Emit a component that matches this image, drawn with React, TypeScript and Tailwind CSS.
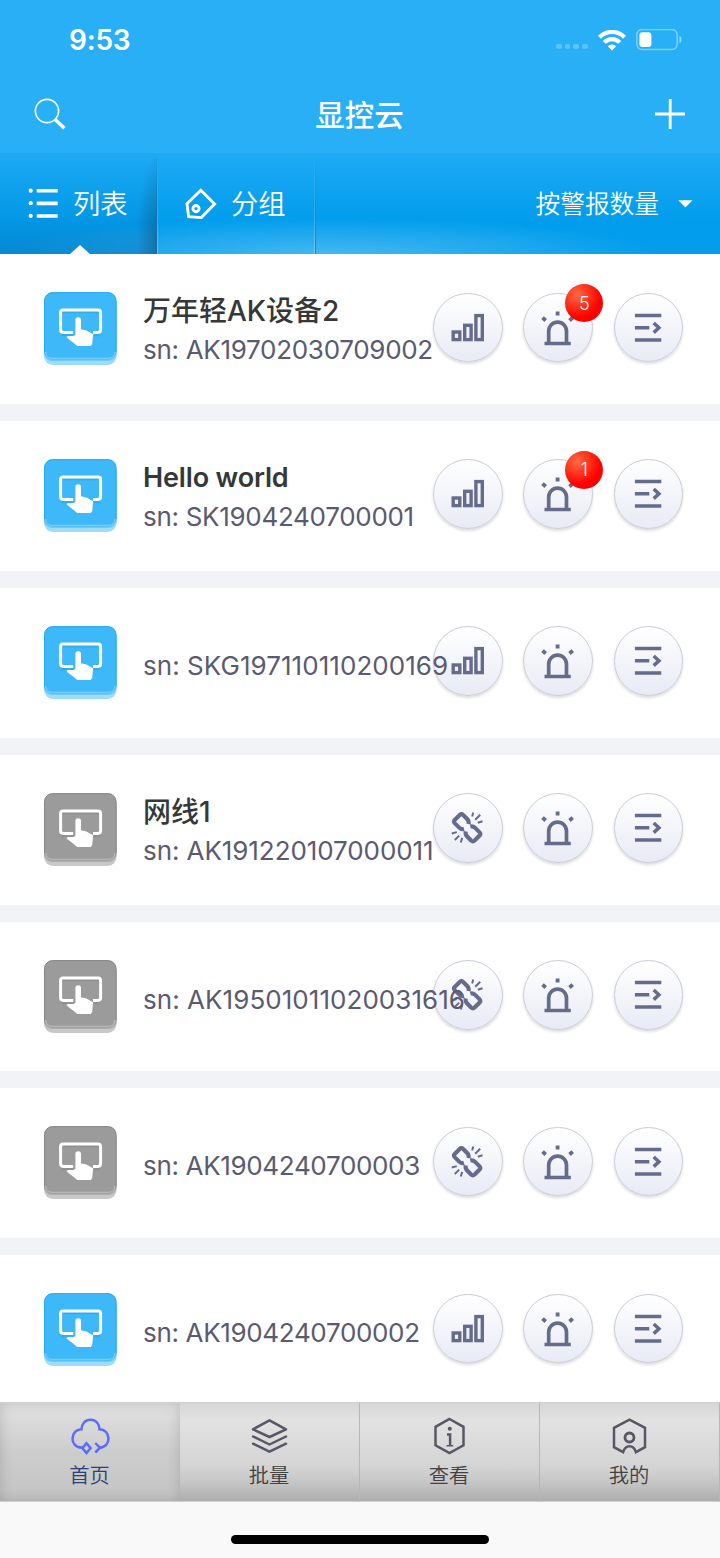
import type { ReactNode } from 'react';
import clsx from 'clsx';

interface Device {
    name?: string;
    sn: string;
    online: boolean;
    alarms?: number;
    nameClass?: string;
    snTracking: string;
}

const devices: Device[] = [
    { name: '万年轻AK设备2', sn: 'AK19702030709002', online: true, alarms: 5, nameClass: 'text-[28px] font-medium', snTracking: 'tracking-[-0.3px]' },
    { name: 'Hello world', sn: 'SK1904240700001', online: true, alarms: 1, nameClass: 'text-[27px] font-semibold tracking-[-0.15px]', snTracking: 'tracking-[-0.3px]' },
    { sn: 'SKG197110110200169', online: true, snTracking: 'tracking-[0.05px]' },
    { name: '网线1', sn: 'AK191220107000011', online: false, nameClass: 'text-[28px] font-medium', snTracking: 'tracking-[-0.08px]' },
    { sn: 'AK19501011020031616', online: false, snTracking: 'tracking-[0.05px]' },
    { sn: 'AK1904240700003', online: false, snTracking: 'tracking-[-0.34px]' },
    { sn: 'AK1904240700002', online: true, snTracking: 'tracking-[-0.34px]' },
];

function StatusBar() {
    return (
        <div className="flex h-20 items-center justify-between pl-[69px] pr-[37px] text-white">
            <span className="text-[28px] font-semibold leading-none tracking-[-0.2px]">9:53</span>
            <div className="flex items-center">
                <div className="mr-[10px] mt-[13px] flex gap-[3px]">
                    {[0, 1, 2, 3].map((i) => (
                        <span key={i} className="h-[5.5px] w-[5.8px] rounded-[2px] bg-white/25" />
                    ))}
                </div>
                <svg width="28" height="21" viewBox="0 0 28 21" fill="none" stroke="currentColor" strokeWidth="4.2">
                    <path d="M1.5 7.2a17.6 17.6 0 0 1 25 0" />
                    <path d="M6.3 12.4a10.8 10.8 0 0 1 15.4 0" />
                    <path d="M9.8 16.3a5.8 5.8 0 0 1 8.4 0l-4.2 4.3z" fill="currentColor" stroke="none" />
                </svg>
                <svg className="ml-[10px]" width="47" height="22" viewBox="0 0 47 22">
                    <rect x="0.8" y="0.4" width="40.4" height="20.2" rx="5.5" fill="none" stroke="white" strokeOpacity="0.4" strokeWidth="1.5" />
                    <rect x="3.4" y="3.2" width="12" height="14.8" rx="3" fill="white" />
                    <path d="M43.5 6.7c2.7 1.4 2.7 6.2 0 7.6z" fill="white" fillOpacity="0.5" />
                </svg>
            </div>
        </div>
    );
}

function Header() {
    return (
        <div className="flex h-[73px] items-start justify-between px-[34px] text-white">
            <svg className="mt-[17px]" width="33" height="34" viewBox="0 0 33 34" fill="none" stroke="currentColor">
                <circle cx="13" cy="14" r="11.6" strokeWidth="1.6" />
                <path d="M20.8 22.2l9.6 9" strokeWidth="3.4" />
            </svg>
            <h1 className="mr-[2px] mt-[14px] text-[29.5px] font-medium leading-[42px]">显控云</h1>
            <svg className="mt-[18px]" width="32" height="32" viewBox="0 0 32 32" stroke="currentColor" strokeWidth="2.8">
                <path d="M1 16h30M16.2 1v30" />
            </svg>
        </div>
    );
}

function TabBar() {
    return (
        <div className="flex h-[101px] bg-[radial-gradient(ellipse_330px_36px_at_330px_100%,rgba(120,205,245,0.55),transparent),linear-gradient(#1faaf4,#019dec_66%,#049dec)] text-[27.3px] font-[350] text-white">
            <div className="relative flex w-[157px] items-center bg-[radial-gradient(ellipse_20px_84px_at_100%_85%,rgba(20,70,110,0.45),transparent),linear-gradient(transparent,rgba(10,120,190,0.12)_60%,rgba(10,115,185,0.5))] pl-[28px]">
                <svg width="31" height="31" viewBox="0 0 31 31" fill="currentColor">
                    <circle cx="2.7" cy="2.7" r="2.1" />
                    <circle cx="2.7" cy="15.2" r="2.1" />
                    <circle cx="2.7" cy="27.9" r="2.1" />
                    <path d="M8.7 1h21v3.6h-21zM8.7 13.6h21v3.6h-21zM8.7 26.2h21v3.6h-21z" />
                </svg>
                <span className="ml-[14px] mt-[4px]">列表</span>
                <div className="absolute bottom-0 left-[70px] h-[9px] w-[20px] bg-white [clip-path:polygon(50%_0,100%_100%,0_100%)]" />
                <div className="absolute right-0 top-0 h-full w-px bg-linear-to-b from-transparent to-[#0d6ea8]" />
            </div>
            <div className="relative flex w-[159px] items-center pl-[28px]">
                <svg width="32" height="32" viewBox="0 0 32 32" fill="none" stroke="currentColor" strokeWidth="2.9">
                    <path d="M15.8 2.2L29.6 16 16.4 29.6 3.6 28.6 2 15.8z" />
                    <circle cx="11" cy="20.6" r="3.1" />
                </svg>
                <span className="ml-[14px] mt-[4px]">分组</span>
                <div className="absolute right-0 top-0 h-full w-px bg-linear-to-b from-transparent to-[#1683c4]" />
                <div className="absolute right-px top-0 h-full w-px bg-linear-to-b from-transparent to-white/30" />
                <div className="absolute left-0 top-0 h-full w-px bg-linear-to-b from-transparent to-white/30" />
            </div>
            <button className="flex flex-1 items-center justify-end pr-[27px] text-[24.7px]">
                <span className="mt-[2px]">按警报数量</span>
                <svg className="ml-[19px]" width="15" height="8" viewBox="0 0 15 8" fill="currentColor">
                    <path d="M0.3 0.3h14.2L7.4 7.6z" />
                </svg>
            </button>
        </div>
    );
}

function DeviceTile({ online }: { online: boolean }) {
    return (
        <svg className="shrink-0" width="73" height="74" viewBox="0 0 73 74">
            <rect x="0" y="8" width="72.6" height="65" rx="9" fill={online ? '#9edcfb' : '#c8c8c8'} />
            <rect x="0" y="4" width="72.6" height="65" rx="8" fill={online ? '#6dcbfb' : '#aeaeae'} />
            <rect x="0.5" y="0.6" width="71.6" height="66.4" rx="8" fill={online ? '#3db8f9' : '#9b9b9b'} stroke={online ? '#24a9f0' : '#858585'} />
            <path d="M1.5 60q.5 6.5 7 6.5h55.6q6.5 0 7-6.5" fill="none" stroke="white" strokeOpacity="0.35" strokeWidth="1.3" />
            <path d="M17 43h12M50 43h6M18 20h37" stroke={online ? '#1492d8' : '#777777'} strokeOpacity="0.3" strokeWidth="2.5" />
            <path
                d="M29.2 40.4H19.2a2.6 2.6 0 0 1-2.600-2.600V20.600a2.600 2.600 0 0 1 2.600-2.600h34.800a2.600 2.600 0 0 1 2.600 2.600v17.200a2.600 2.600 0 0 1-2.600 2.600h-5"
                fill="none"
                stroke="white"
                strokeWidth="3"
            />
            <path
                d="M31.400 28a2.800 2.800 0 0 1 5.600 0v9.200l5.400 1.200 6.700 3.800-.9 9.800-1.400 2H33.200l-3.800-3.300-6.200-4.600c-1-1.200-.2-2 1-2h5.200l2-1z"
                fill="white"
            />
        </svg>
    );
}

function RoundButton({ children }: { children: ReactNode }) {
    return (
        <button className="mt-[0.5px] size-[69.5px] shrink-0 rounded-full border-[1.5px] border-[#cccbd8] bg-linear-to-b from-white to-[#e8ebf5] shadow-[0_2px_3px_rgba(0,0,0,0.14)]">
            <svg className="-m-px" width="70" height="70" viewBox="0.5 0.2 70 70" fill="none" stroke="#656c8b">
                {children}
            </svg>
        </button>
    );
}

function ChartIcon() {
    return (
        <g strokeWidth="3.4">
            <rect x="20.7" y="39.2" width="6.6" height="7.6" />
            <rect x="32.2" y="32.5" width="6.4" height="14.3" />
            <rect x="43.4" y="22.8" width="6.4" height="24" />
        </g>
    );
}

function BrokenLinkIcon() {
    return (
        <g>
            <path
                d="M31.5 36.2c-2.2.6-3.6-.2-4.8-1.4l-4.3-4.2c-1.2-1.2-1.3-2.2-.2-3.4l5-5c1.3-1.2 2.3-1.1 3.5 0l4.2 4.3c1 1 1.6 2.5 1.2 4.8"
                strokeWidth="4.1"
            />
            <path
                d="M37.8 33.7c2.2-.6 3.6.2 4.8 1.4l4.3 4.2c1.2 1.2 1.3 2.2.2 3.4l-5 5c-1.3 1.2-2.3 1.1-3.5 0l-4.2-4.3c-1-1-1.6-2.5-1.2-4.8"
                strokeWidth="4.1"
            />
            <path
                d="M40.7 19.7l-1 4M47.7 21.9l-5 5M50 28.4l-4.7 1.6M19.3 40.7l5-1.4M22.3 47.2l4.4-4.4M28.3 49.7l1.4-4.6"
                strokeWidth="2"
            />
        </g>
    );
}

function AlarmIcon() {
    return (
        <g>
            <path d="M26.200 50V38.200a8.900 8.900 0 0 1 17.800 0V50" strokeWidth="3.7" />
            <path d="M22 50.700h26.300" strokeWidth="3.5" />
            <path d="M35.100 18.700v4M20 24.800l3.200 2.900M50.200 24.800l-3.200 2.900" strokeWidth="3.8" />
        </g>
    );
}

function DetailIcon() {
    return (
        <g strokeWidth="3.5">
            <path d="M21.400 22.700h26.400M21.400 35h14.400M21.400 47.100h26.400" />
            <path d="M40.200 30.200l5.200 4.800-5.200 4.800" />
        </g>
    );
}

function DeviceRow({ device }: { device: Device }) {
    return (
        <div className="flex h-[166.9px] shrink-0 items-start border-b-[17px] border-[#f2f3f6] bg-white pl-[44px]">
            <div className="mt-[38px] h-[74px] w-[73px]">
                <DeviceTile online={device.online} />
            </div>
            <div
                className={clsx(
                    'relative z-10 ml-[26px] flex h-[150px] w-[290px] flex-col justify-center whitespace-nowrap',
                    device.name ? 'pt-[2px]' : 'pt-[6px]'
                )}
            >
                {device.name && <h2 className={clsx('leading-[40px] text-[#363838]', device.nameClass)}>{device.name}</h2>}
                <p className={clsx('text-[26px] leading-[38px] text-[#5a5a72]', device.snTracking)}>sn: {device.sn}</p>
            </div>
            <div className="mt-[38px] flex gap-[20.8px]">
                <RoundButton>{device.online ? <ChartIcon /> : <BrokenLinkIcon />}</RoundButton>
                <div className="relative">
                    <RoundButton>
                        <AlarmIcon />
                    </RoundButton>
                    {device.alarms && (
                        <span className="absolute -top-2 left-[42px] flex size-[38px] items-center justify-center rounded-full bg-[radial-gradient(circle_at_32%_28%,#ff6a45,#ff2a15_38%,#ff0000_62%)] text-[18px] font-[350] text-white">
                            {device.alarms}
                        </span>
                    )}
                </div>
                <RoundButton>
                    <DetailIcon />
                </RoundButton>
            </div>
        </div>
    );
}

function NavItem({ label, active, children }: { label: string; active?: boolean; children: ReactNode }) {
    return (
        <div
            className={clsx(
                'flex w-[180px] flex-col items-center border-y border-y-[#d0d0d0] pr-px pt-[12px]',
                active
                    ? 'bg-linear-to-b from-[#e2e2e2] via-[#cdcdcd] to-[#c4c4c4] text-[#2b4078] shadow-[inset_0_0_14px_rgba(0,0,0,0.16)]'
                    : 'border-r border-r-[#b7b7b9] bg-[linear-gradient(#d6d6d6,#e2e2e2_18%,#d4d4d4_65%,#c5c5c5_82%,#adadad)] text-[#414141]'
            )}
        >
            <svg className="translate-x-[0.5px]" width="42" height="42" viewBox="0 0 42 42" fill="none" stroke={active ? '#5a6cff' : '#585766'} strokeWidth="2.5">
                {children}
            </svg>
            <span className="mt-[4px] text-[20.3px] font-[350] leading-[30px]">{label}</span>
        </div>
    );
}

function BottomNav() {
    return (
        <nav className="flex h-[100px] shrink-0">
            <NavItem label="首页" active>
                <path d="M13.3 32.6h-1.6C6.5 32.6 3 28.5 3 23.5c0-5.2 4-9.2 9-9.2C12 9 15.7 4.7 21 4.7s9 4.3 9 9.6c5 0 9 4 9 9.2 0 5-3.5 9.1-8.7 9.1" />
                <path d="M17 28.2l4.1 4.9-4.1 4.9-4.1-4.9zM25.8 28l4.6 4.7-4.6 4.9" />
            </NavItem>
            <NavItem label="批量">
                <path strokeLinejoin="round" strokeLinecap="round" d="M21 5.3l16.5 9L21 22 4.5 14.3zM4.5 21.500L21 29.500 37.500 21.500M4.500 28.700L21 36.700l16.500-8" />
            </NavItem>
            <NavItem label="查看">
                <path d="M21 4l14 7.8v18.500L21 38 7 30.300V11.800z" />
                <circle cx="21.300" cy="13.800" r="2" fill="#585766" stroke="none" />
                <path d="M18.500 19.500h3.100v10.800" strokeWidth="2.500" />
                <path d="M18 30.800h6.800" strokeWidth="1.600" />
            </NavItem>
            <NavItem label="我的">
                <path d="M27.400 36.700l9.100-4.500V12.800L21 4.600 5.500 12.800v19.400l9.100 4.500c1.200-3.800 3.500-5.800 6.400-5.800s5.200 2 6.400 5.800z" stroke="none" />
                <path d="M14.600 37.200l-9.100-5V12.800L21 4.600l15.500 8.200v19.400l-9.100 5c-1.200-4-3.500-6-6.400-6s-5.200 2-6.400 6z" />
                <circle cx="21" cy="22.500" r="4.500" strokeWidth="2.800" />
            </NavItem>
        </nav>
    );
}

export default function App() {
    return (
        <div className="flex h-[1558px] w-[720px] flex-col overflow-hidden bg-[#f9f9f9] font-['Inter','Noto_Sans_CJK_SC',sans-serif]">
            <header className="shrink-0 bg-[#28aff5]">
                <StatusBar />
                <Header />
                <TabBar />
            </header>
            <main className="flex h-[1148px] shrink-0 flex-col overflow-hidden bg-white">
                {devices.map((device) => (
                    <DeviceRow key={device.sn} device={device} />
                ))}
            </main>
            <BottomNav />
            <div className="flex flex-1 justify-center pt-[33px]">
                <div className="h-[9px] w-[258px] rounded-full bg-black" />
            </div>
        </div>
    );
}
